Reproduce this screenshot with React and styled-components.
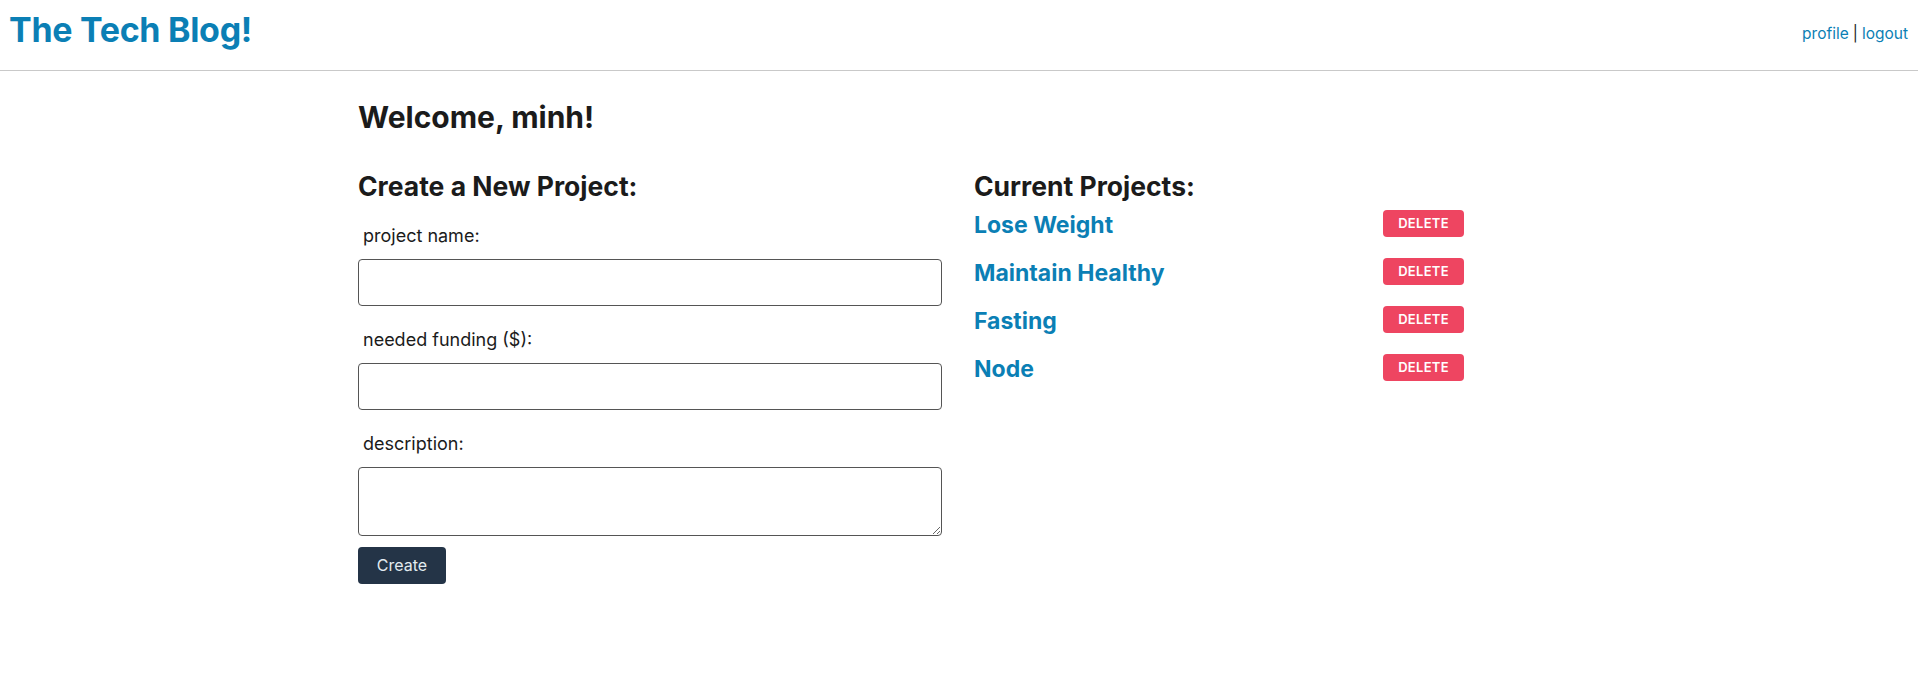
import React from "react";
import styled, { createGlobalStyle } from "styled-components";

const Global = createGlobalStyle`
  html, body { margin: 0; padding: 0; background: #fff; }
  body { font-family: Inter, "Noto Sans", "Liberation Sans", sans-serif; color: #1b1b1b; }
  * { box-sizing: border-box; }
`;

const Header = styled.header`
  display: flex;
  justify-content: space-between;
  align-items: center;
  height: 71px;
  padding: 0 10px 4px 9px;
  border-bottom: 1px solid #c9c9c9;
`;

const Brand = styled.a`
  font-size: 34px;
  font-weight: 700;
  color: #0b7fb5;
  text-decoration: none;
  letter-spacing: -0.3px;
  margin-bottom: 8px;
`;

const Nav = styled.nav`
  font-size: 15.5px;
  color: #1b1b1b;
  display: flex;
  gap: 4px;
`;

const NavLink = styled.a`
  color: #0b7fb5;
  text-decoration: none;
`;

const Main = styled.main`
  padding: 28px 0 0 358px;
`;

const Welcome = styled.h1`
  margin: 0 0 32px;
  font-size: 30px;
  line-height: 1.25;
  font-weight: 700;
`;

const Columns = styled.div`
  display: flex;
  gap: 32px;
  align-items: flex-start;
`;

const LeftCol = styled.section`
  width: 584px;
  display: flex;
  flex-direction: column;
`;

const RightCol = styled.section`
  width: 490px;
  display: flex;
  flex-direction: column;
`;

const SectionTitle = styled.h2`
  margin: 0;
  font-size: 26.5px;
  line-height: 34px;
  font-weight: 700;
`;

const Label = styled.label`
  display: block;
  font-size: 18px;
  line-height: 27px;
  padding-left: 5px;
  margin: ${(p) => (p.$first ? "19px" : "20px")} 0 10px;
`;

const Input = styled.input`
  display: block;
  width: 100%;
  height: 47px;
  border: 1px solid #555;
  border-radius: 4px;
  font-size: 16px;
  padding: 0 10px;
  background: #fff;
`;

const TextArea = styled.textarea`
  display: block;
  width: 100%;
  height: 69px;
  border: 1px solid #555;
  border-radius: 4px;
  font-size: 16px;
  padding: 6px 10px;
  resize: vertical;
  font-family: inherit;
`;

const CreateButton = styled.button`
  margin-top: 11px;
  align-self: flex-start;
  width: 88px;
  height: 37px;
  border: none;
  border-radius: 4px;
  background: #243447;
  color: #e2ebf0;
  font-family: inherit;
  font-size: 16px;
`;

const ProjectList = styled.ul`
  list-style: none;
  margin: 7px 0 0;
  padding: 0;
  display: flex;
  flex-direction: column;
  gap: 21px;
`;

const ProjectRow = styled.li`
  display: flex;
  justify-content: space-between;
  align-items: center;
  height: 27px;
`;

const ProjectLink = styled.a`
  font-size: 23px;
  font-weight: 700;
  color: #0b7fb5;
  text-decoration: none;
  line-height: 1;
  margin-top: 5px;
`;

const DeleteButton = styled.button`
  width: 81px;
  height: 27px;
  border: none;
  border-radius: 4px;
  background: #ee4561;
  color: #fff;
  font-family: inherit;
  font-size: 13px;
  font-weight: 600;
  letter-spacing: 0.3px;
  text-transform: uppercase;
`;

const projects = ["Lose Weight", "Maintain Healthy", "Fasting", "Node"];

export default function App() {
  return (
    <>
      <Global />
      <Header>
        <Brand href="#">The Tech Blog!</Brand>
        <Nav>
          <NavLink href="#">profile</NavLink>
          <span>|</span>
          <NavLink href="#">logout</NavLink>
        </Nav>
      </Header>
      <Main>
        <Welcome>Welcome, minh!</Welcome>
        <Columns>
          <LeftCol>
            <SectionTitle>Create a New Project:</SectionTitle>
            <Label $first>project name:</Label>
            <Input type="text" />
            <Label>needed funding ($):</Label>
            <Input type="number" />
            <Label>description:</Label>
            <TextArea />
            <CreateButton>Create</CreateButton>
          </LeftCol>
          <RightCol>
            <SectionTitle>Current Projects:</SectionTitle>
            <ProjectList>
              {projects.map((p) => (
                <ProjectRow key={p}>
                  <ProjectLink href="#">{p}</ProjectLink>
                  <DeleteButton>Delete</DeleteButton>
                </ProjectRow>
              ))}
            </ProjectList>
          </RightCol>
        </Columns>
      </Main>
    </>
  );
}
